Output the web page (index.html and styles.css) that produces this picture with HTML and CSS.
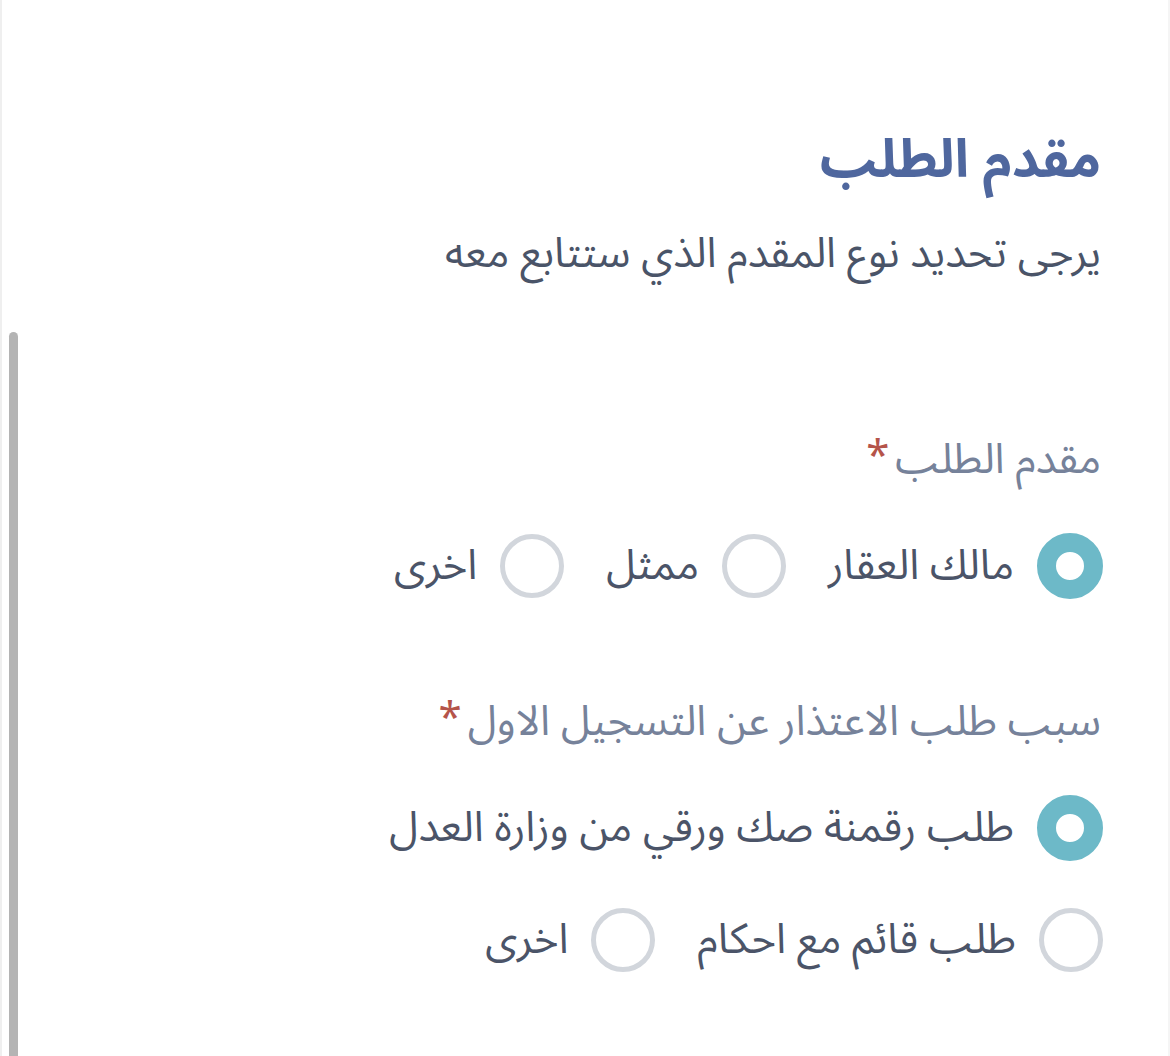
FILE: index.html
```html
<!DOCTYPE html>
<html lang="ar" dir="rtl">
<head>
<meta charset="utf-8">
<title>مقدم الطلب</title>
<link rel="stylesheet" href="styles.css">
</head>
<body>
<div class="page">
  <div class="scroll-thumb"></div>
  <section class="form">
    <h1 class="title">مقدم الطلب</h1>
    <p class="subtitle">يرجى تحديد نوع المقدم الذي ستتابع معه</p>

    <div class="field field-first">
      <div class="label">مقدم الطلب<span class="req">*</span></div>
      <div class="options">
        <label class="option"><span class="radio checked"></span><span class="opt-text">مالك العقار</span></label>
        <label class="option"><span class="radio"></span><span class="opt-text">ممثل</span></label>
        <label class="option"><span class="radio"></span><span class="opt-text">اخرى</span></label>
      </div>
    </div>

    <div class="field field-second">
      <div class="label">سبب طلب الاعتذار عن التسجيل الاول<span class="req">*</span></div>
      <div class="options">
        <label class="option"><span class="radio checked"></span><span class="opt-text">طلب رقمنة صك ورقي من وزارة العدل</span></label>
      </div>
      <div class="options options-next">
        <label class="option"><span class="radio"></span><span class="opt-text">طلب قائم مع احكام</span></label>
        <label class="option"><span class="radio"></span><span class="opt-text">اخرى</span></label>
      </div>
    </div>
  </section>
</div>
</body>
</html>
```

FILE: styles.css
```css
html, body {
  margin: 0;
  padding: 0;
  background: #ffffff;
}
body {
  font-family: "Noto Sans Arabic", "DejaVu Sans", "Noto Sans", sans-serif;
}
.page {
  position: relative;
  height: 1056px;
  box-sizing: border-box;
  border-left: 2px solid #efefef;
  border-right: 2px solid #f5f5f5;
  padding: 128px 67px 0 0;
  overflow: hidden;
}
.scroll-thumb {
  position: absolute;
  left: 7px;
  top: 332px;
  bottom: 0;
  width: 9px;
  border-radius: 5px 5px 0 0;
  background: #b4b4b4;
}
.title {
  margin: 0;
  font-size: 53px;
  line-height: 64px;
  font-weight: 700;
  color: #4f679e;
}
.subtitle {
  margin: 34px 0 0;
  font-size: 42px;
  line-height: 56px;
  color: #4a5468;
}
.field-first {
  margin-top: 150px;
}
.field-second {
  margin-top: 95px;
}
.label {
  font-size: 42px;
  line-height: 56px;
  color: #76829a;
}
.req {
  color: #b5544a;
  font-size: 42px;
  line-height: 0;
  vertical-align: 3px;
  margin-right: 6px;
}
.options {
  display: flex;
  align-items: center;
  gap: 42px;
  margin-top: 45px;
  margin-right: -2px;
}
.options-next {
  margin-top: 47px;
}
.option {
  display: flex;
  align-items: center;
  gap: 23px;
}
.radio {
  width: 54px;
  height: 54px;
  border: 5px solid #d2d6dc;
  border-radius: 50%;
  flex: none;
}
.radio.checked {
  border: 19px solid #6db9c8;
  width: 28px;
  height: 28px;
  background: #ffffff;
}
.opt-text {
  font-size: 42px;
  line-height: 56px;
  color: #4b5468;
}
```
